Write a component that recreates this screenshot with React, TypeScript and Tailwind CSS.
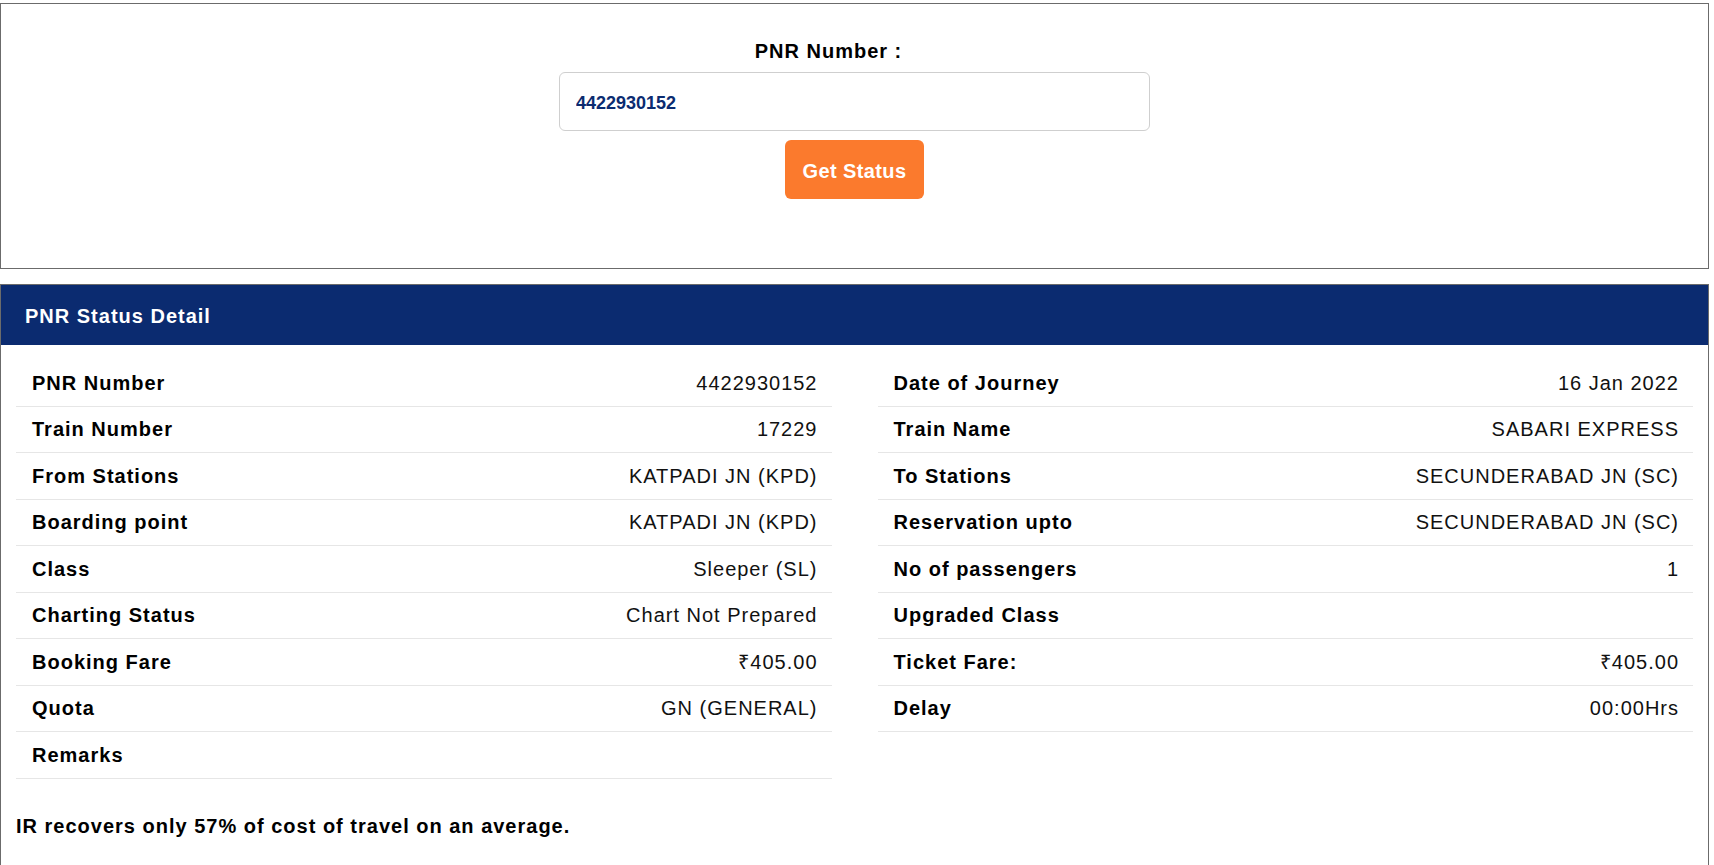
import React, { useState } from 'react';

type Row = { label: string; value: string };

const leftRows: Row[] = [
  { label: 'PNR Number', value: '4422930152' },
  { label: 'Train Number', value: '17229' },
  { label: 'From Stations', value: 'KATPADI JN (KPD)' },
  { label: 'Boarding point', value: 'KATPADI JN (KPD)' },
  { label: 'Class', value: 'Sleeper (SL)' },
  { label: 'Charting Status', value: 'Chart Not Prepared' },
  { label: 'Booking Fare', value: '₹405.00' },
  { label: 'Quota', value: 'GN (GENERAL)' },
  { label: 'Remarks', value: '' },
];

const rightRows: Row[] = [
  { label: 'Date of Journey', value: '16 Jan 2022' },
  { label: 'Train Name', value: 'SABARI EXPRESS' },
  { label: 'To Stations', value: 'SECUNDERABAD JN (SC)' },
  { label: 'Reservation upto', value: 'SECUNDERABAD JN (SC)' },
  { label: 'No of passengers', value: '1' },
  { label: 'Upgraded Class', value: '' },
  { label: 'Ticket Fare:', value: '₹405.00' },
  { label: 'Delay', value: '00:00Hrs' },
];

function DetailList({ rows }: { rows: Row[] }) {
  return (
    <div className="flex flex-col">
      {rows.map((row) => (
        <div
          key={row.label}
          className="flex items-center justify-between h-[46.5px] pl-[16px] pr-[14px] border-b border-[#e6e6e6]"
        >
          <span className="font-bold text-black">{row.label}</span>
          <span className="text-[#111]">{row.value}</span>
        </div>
      ))}
    </div>
  );
}

export default function App() {
  const [pnr, setPnr] = useState('4422930152');

  return (
    <div
      className="w-[1709px] pt-[3px] bg-white text-[20px] tracking-[1px] leading-[24px] text-black"
      style={{ fontFamily: '"Liberation Sans", Arial, sans-serif' }}
    >
      {/* Search box */}
      <div className="border border-[#6b6b6b] h-[266px] flex flex-col items-center pt-[35px]">
        <label className="font-bold pr-[52px]">PNR Number :</label>
        <input
          type="text"
          value={pnr}
          onChange={(e) => setPnr(e.target.value)}
          className="mt-[9px] w-[591px] h-[59px] px-[16px] pt-[4px] border border-[#cfcfcf] rounded-[6px] text-[18px] tracking-normal font-bold text-[#0b2b70] outline-none"
        />
        <button className="mt-[9px] w-[139px] h-[59px] pt-[2px] rounded-[6px] bg-[#fb7a2d] text-white font-bold tracking-[0.4px]">
          Get Status
        </button>
      </div>

      {/* Status detail */}
      <div className="mt-[15px] border border-[#6b6b6b] pb-[60px]">
        <div className="h-[60px] bg-[#0b2b70] flex items-center px-[24px] pt-[2px]">
          <h2 className="font-bold text-white">PNR Status Detail</h2>
        </div>
        <div className="px-[15px] pt-[15px]">
          <div className="grid grid-cols-2 gap-x-[46px]">
            <DetailList rows={leftRows} />
            <DetailList rows={rightRows} />
          </div>
          <p className="mt-[35px] font-bold">IR recovers only 57% of cost of travel on an average.</p>
        </div>
      </div>
    </div>
  );
}
